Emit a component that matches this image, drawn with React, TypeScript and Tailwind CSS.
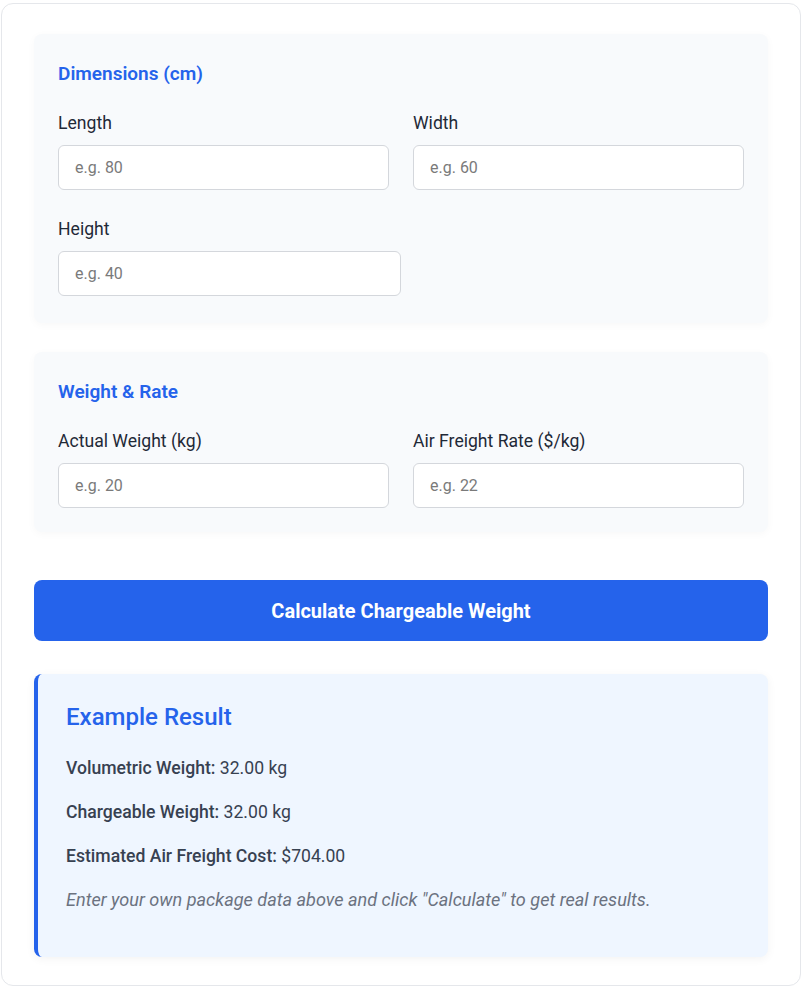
import React from "react";

const font = { fontFamily: "Roboto, 'Noto Sans', sans-serif" };

function Field({ label, placeholder, className = "" }: { label: string; placeholder: string; className?: string }) {
  return (
    <div className={className}>
      <label className="block text-[17.6px] leading-[24px] text-[#1f2937] mb-[10px]">{label}</label>
      <input
        type="number"
        placeholder={placeholder}
        className="block w-full h-[45px] rounded-[6px] border border-[#d4d7dc] bg-white px-[16px] text-[16px] text-[#111827] placeholder:text-[#7a7a7a] outline-none"
      />
    </div>
  );
}

export default function App() {
  return (
    <div className="min-h-[988px] bg-white" style={font}>
      <div className="ml-[1px] mt-[3px] w-[800px] rounded-[12px] border border-[#e5e7eb] bg-white px-[32px] pt-[30px] pb-[28px]">
        <section className="rounded-[8px] bg-[#f8fafc] px-[24px] pt-[25px] pb-[27px] shadow-[0_2px_8px_rgba(0,0,0,0.03)]">
          <h2 className="text-[19px] leading-[30px] font-semibold text-[#2563eb] mb-[22px]">Dimensions (cm)</h2>
          <div className="grid grid-cols-2 gap-x-[24px]">
            <Field label="Length" placeholder="e.g. 80" />
            <Field label="Width" placeholder="e.g. 60" />
          </div>
          <Field label="Height" placeholder="e.g. 40" className="w-1/2 mt-[27px]" />
        </section>

        <section className="mt-[29px] rounded-[8px] bg-[#f8fafc] px-[24px] pt-[25px] pb-[24px] shadow-[0_2px_8px_rgba(0,0,0,0.03)]">
          <h2 className="text-[19px] leading-[30px] font-semibold text-[#2563eb] mb-[22px]">Weight &amp; Rate</h2>
          <div className="grid grid-cols-2 gap-x-[24px]">
            <Field label="Actual Weight (kg)" placeholder="e.g. 20" />
            <Field label="Air Freight Rate ($/kg)" placeholder="e.g. 22" />
          </div>
        </section>

        <button className="mt-[48px] block w-full h-[61px] rounded-[8px] bg-[#2563eb] text-white text-[20px] font-bold">
          Calculate Chargeable Weight
        </button>

        <div className="mt-[33px] rounded-[8px] border-l-4 border-[#2563eb] bg-[#eff6ff] pl-[28px] pr-[24px] pt-[28px] pb-[45px] shadow-[0_2px_10px_rgba(0,0,0,0.05)]">
          <h3 className="text-[24px] leading-[30px] font-medium text-[#2563eb] mb-[24px]">Example Result</h3>
          <div className="text-[17.6px] leading-[24px] text-[#374151] space-y-[20px]">
            <p><strong className="font-medium">Volumetric Weight:</strong> 32.00 kg</p>
            <p><strong className="font-medium">Chargeable Weight:</strong> 32.00 kg</p>
            <p><strong className="font-medium">Estimated Air Freight Cost:</strong> $704.00</p>
            <p className="italic text-[18.1px] text-[#6b7280]">Enter your own package data above and click "Calculate" to get real results.</p>
          </div>
        </div>
      </div>
    </div>
  );
}
